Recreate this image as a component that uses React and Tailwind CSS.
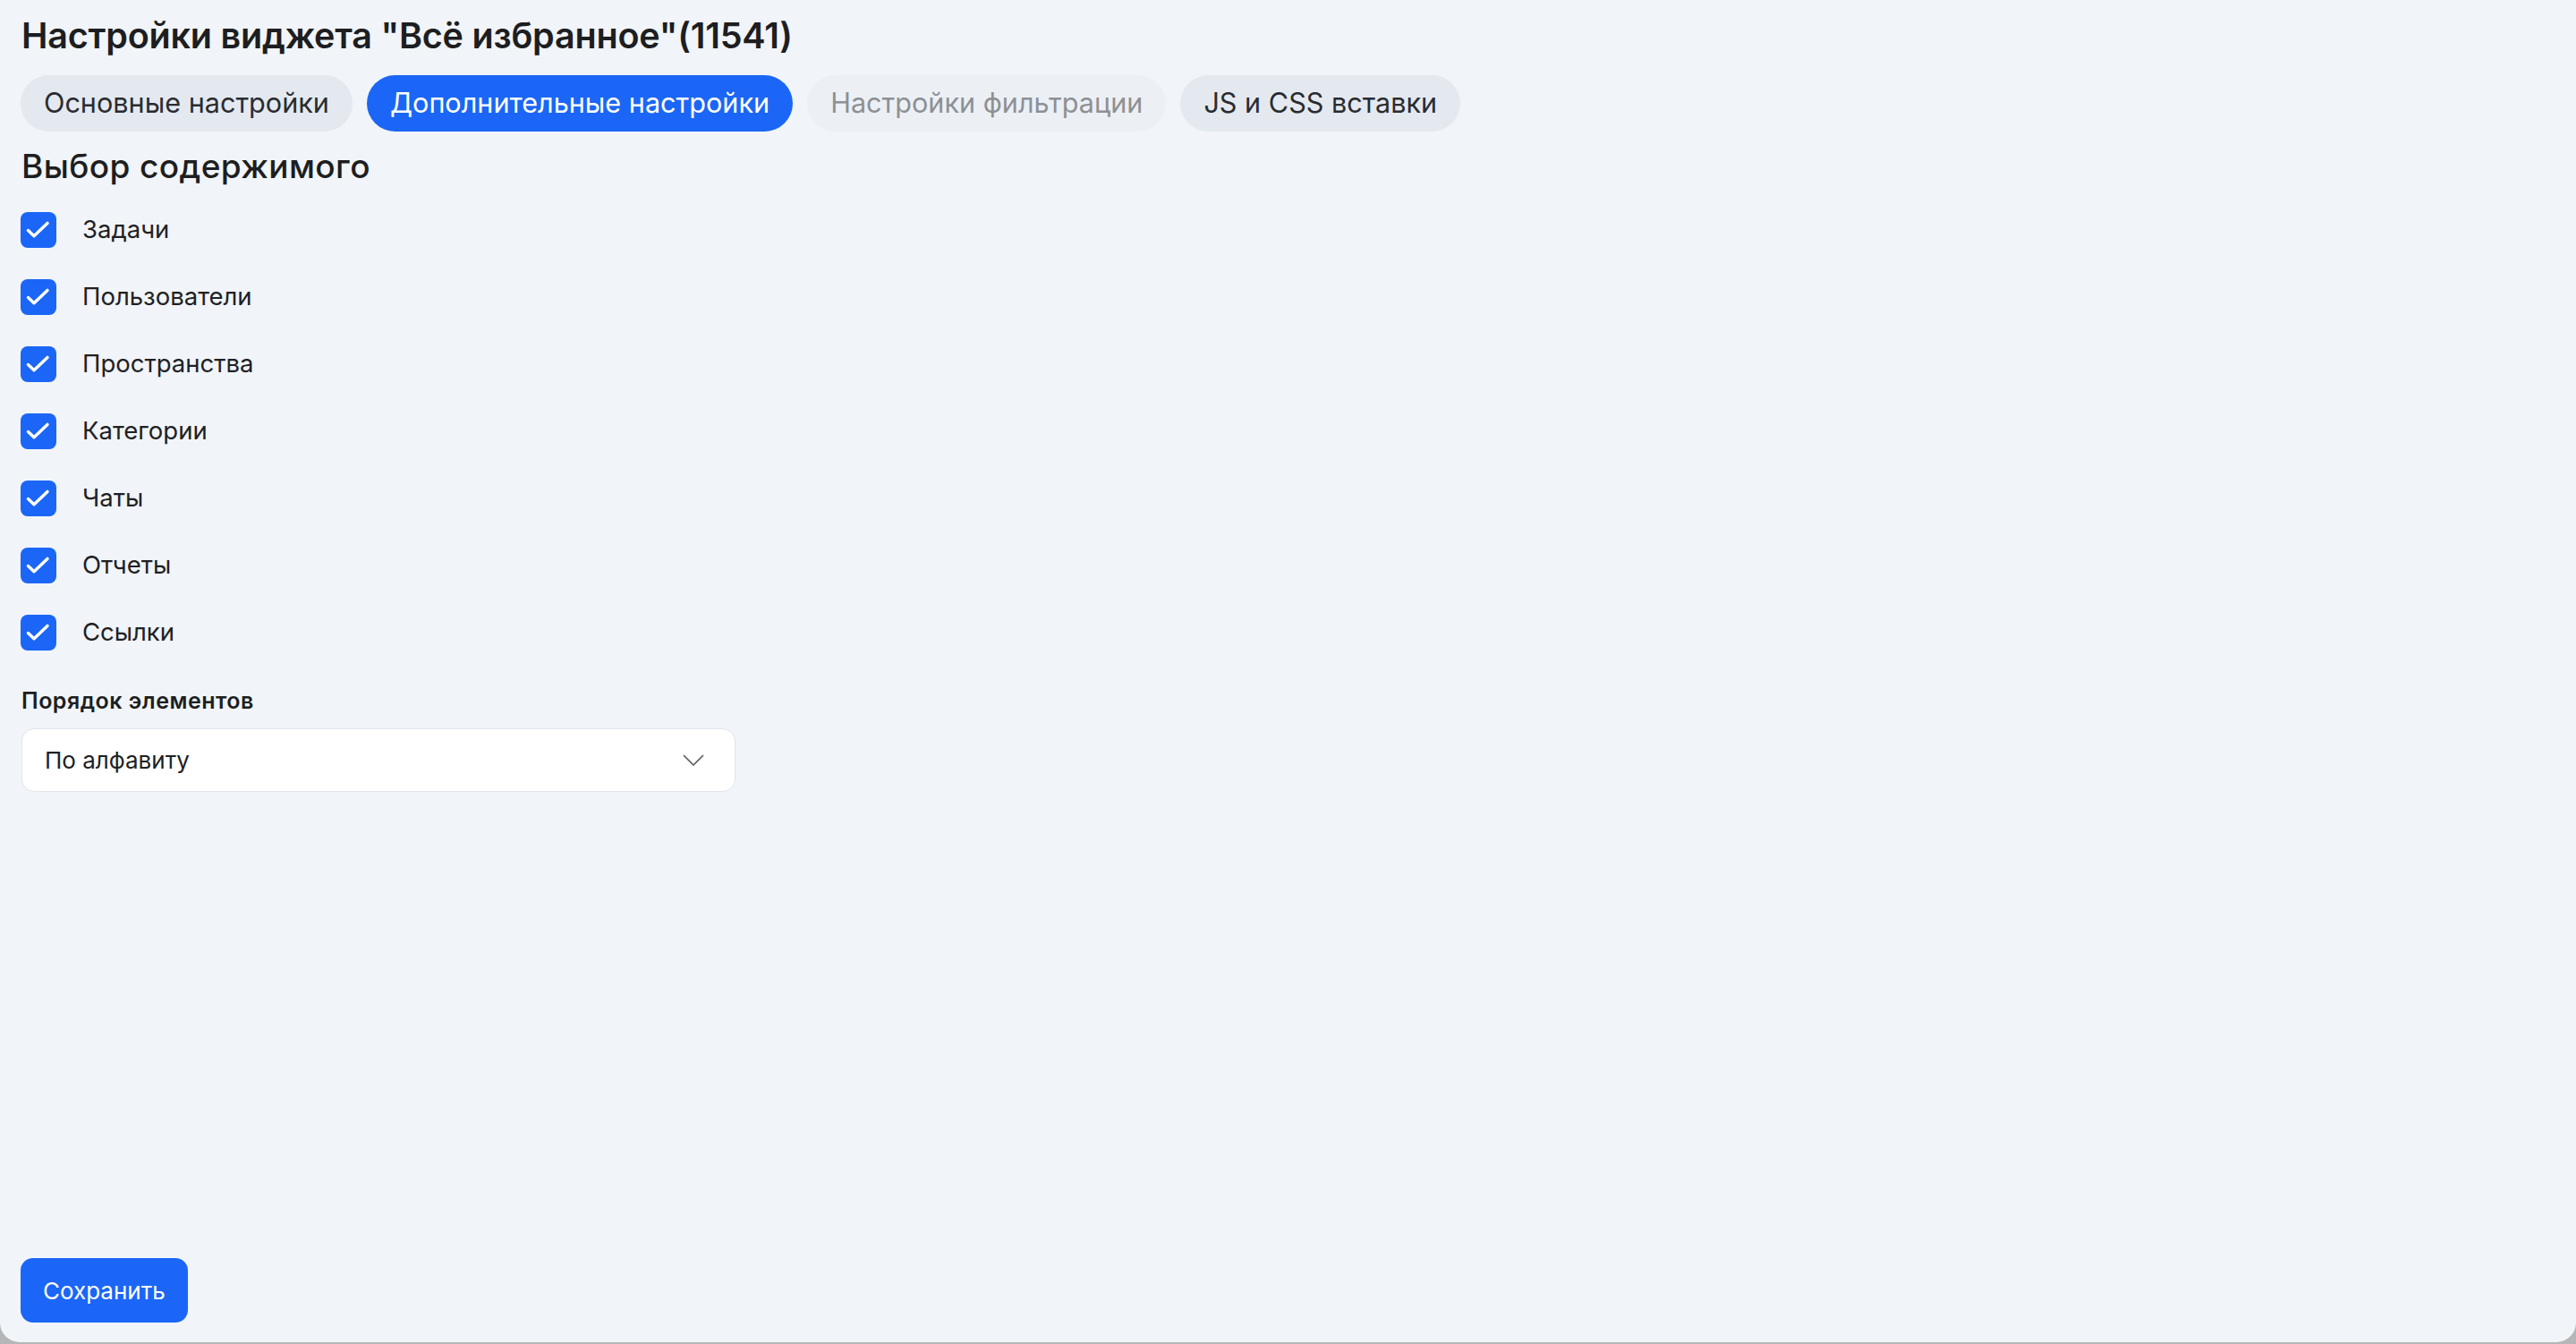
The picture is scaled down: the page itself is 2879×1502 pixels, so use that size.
import React, { useState } from "react";

const tabs = [
    { label: "Основные настройки", state: "idle" },
    { label: "Дополнительные настройки", state: "active" },
    { label: "Настройки фильтрации", state: "disabled" },
    { label: "JS и CSS вставки", state: "idle" },
];

const contentTypes = ["Задачи", "Пользователи", "Пространства", "Категории", "Чаты", "Отчеты", "Ссылки"];

const CheckIcon = () => (
    <svg width="40" height="40" viewBox="0 0 40 40" fill="none">
        <path d="M8.5 20.5L15 26.8L30 12.4" stroke="#fff" strokeWidth="3.4" strokeLinecap="round" strokeLinejoin="round" />
    </svg>
);

const ChevronDown = () => (
    <svg width="24" height="14" viewBox="0 0 24 14" fill="none">
        <path d="M1.5 1.5L12 12L22.5 1.5" stroke="#5b5d61" strokeWidth="1.7" strokeLinecap="round" strokeLinejoin="round" />
    </svg>
);

const App = () => {
    const [checked, setChecked] = useState(() => contentTypes.map(() => true));

    const toggle = (i) => setChecked((prev) => prev.map((v, j) => (j === i ? !v : v)));

    const tabClass = (state) => {
        if (state === "active") return "bg-[#1b66f6] text-white";
        if (state === "disabled") return "bg-[#ecf0f4] text-[#8d9095]";
        return "bg-[#e4e9f0] text-[#2a2c30]";
    };

    return (
        <div className="min-h-screen w-full bg-[#b5b6b8] font-['Inter',sans-serif]">
            <div className="flex h-[1500px] flex-col rounded-b-[22px] bg-[#f1f4f8] px-6 pb-[22px] pt-4 text-[#1d1e21]">
                {/* header */}
                <h1 className="text-[39.5px] font-semibold leading-[48px] tracking-[-0.2px]">
                    Настройки виджета "Всё избранное"(11541)
                </h1>

                {/* settings tabs */}
                <div className="mt-5 flex gap-4 -ml-px">
                    {tabs.map((t) => (
                        <button
                            key={t.label}
                            className={`h-[63px] rounded-full px-[26px] text-[30.6px] leading-none ${tabClass(t.state)}`}
                        >
                            {t.label}
                        </button>
                    ))}
                </div>

                {/* content selection */}
                <h2 className="mt-[17px] text-[37px] font-medium leading-[44px] tracking-[0.4px]">Выбор содержимого</h2>

                <div className="mt-[29px] flex flex-col gap-[35px]">
                    {contentTypes.map((name, i) => (
                        <label key={name} className="flex h-10 cursor-pointer items-center gap-[29px]">
                            <span
                                onClick={() => toggle(i)}
                                className={`-ml-px flex h-10 w-10 items-center justify-center rounded-[8px] ${
                                    checked[i] ? "bg-[#1b66f6]" : "border-2 border-[#c9ced6] bg-white"
                                }`}
                            >
                                {checked[i] && <CheckIcon />}
                            </span>
                            <span className="text-[27.5px] leading-none text-[#202124]">{name}</span>
                        </label>
                    ))}
                </div>

                {/* ordering */}
                <div className="mt-[41px] text-[25px] font-semibold leading-[30px] tracking-[0.5px]">Порядок элементов</div>
                <div className="mt-4 flex h-[71px] w-[798px] items-center justify-between rounded-[14px] border border-[#e1e4e8] bg-white pl-[25px] pr-[34px]">
                    <span className="text-[26px] text-[#202124]">По алфавиту</span>
                    <ChevronDown />
                </div>

                <div className="mt-auto">
                    <button className="-ml-px h-[72px] rounded-[14px] bg-[#1b66f6] px-[25px] text-[26px] text-white">
                        Сохранить
                    </button>
                </div>
            </div>
        </div>
    );
};

export default App;
